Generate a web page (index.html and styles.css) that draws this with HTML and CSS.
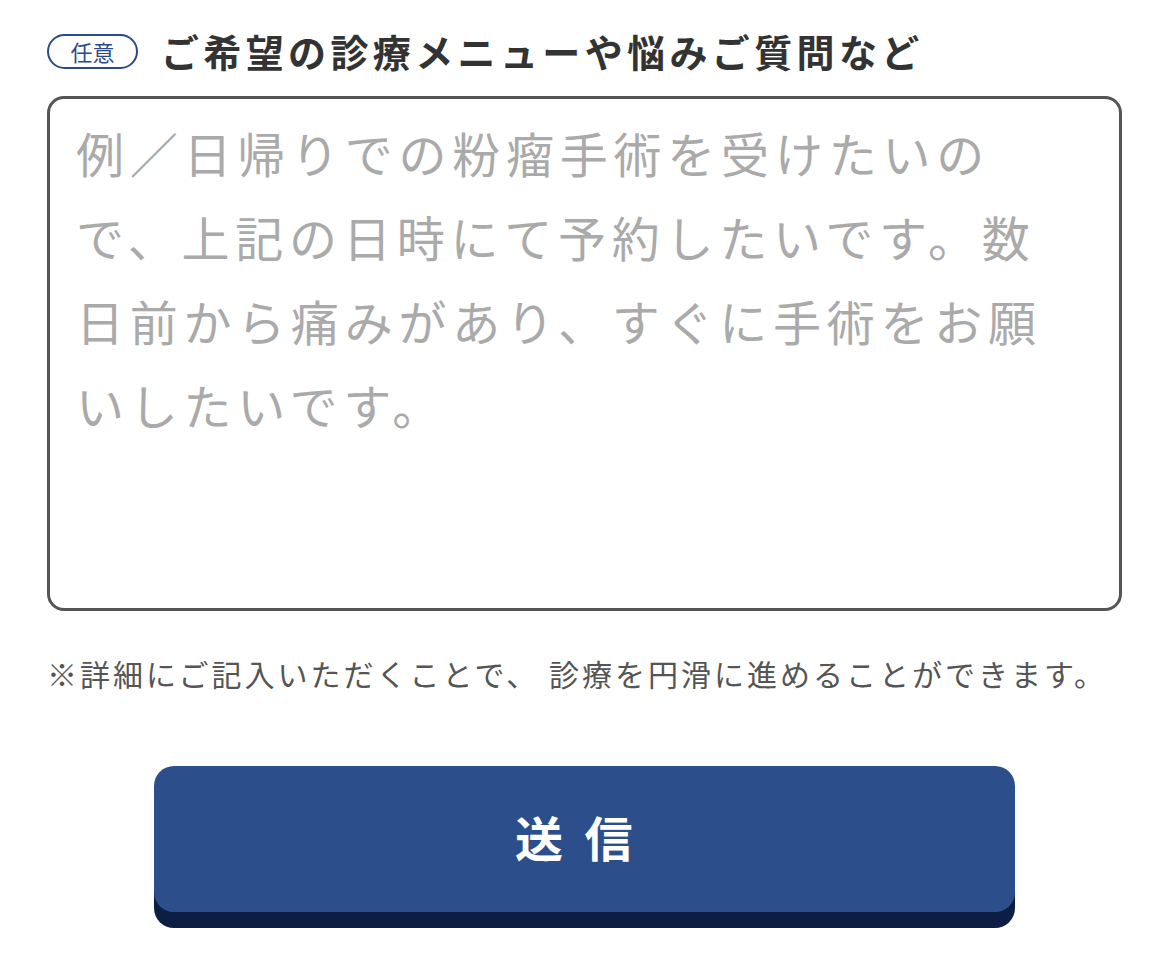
FILE: index.html
```html
<!DOCTYPE html>
<html lang="ja">
<head>
<meta charset="utf-8">
<title>お問い合わせ</title>
<link rel="stylesheet" href="styles.css">
</head>
<body>
<form class="form">
  <div class="field-head">
    <span class="badge">任意</span>
    <label class="field-label" for="msg">ご希望の診療メニューや悩みご質問など</label>
  </div>
  <textarea id="msg" class="field-input" placeholder="例／日帰りでの粉瘤手術を受けたいので、上記の日時にて予約したいです。数日前から痛みがあり、すぐに手術をお願いしたいです。"></textarea>
  <p class="note">※詳細にご記入いただくことで、 診療を円滑に進めることができます。</p>
  <div class="actions">
    <button type="button" class="submit">送信</button>
  </div>
</form>
</body>
</html>
```

FILE: styles.css
```css
html, body {
  margin: 0;
  padding: 0;
  background: #ffffff;
}

body {
  font-family: "Noto Sans CJK JP", "Noto Sans", sans-serif;
  color: #333333;
  min-height: 964px;
}

.form {
  padding: 33px 48px 36px 47px;
}

.field-head {
  display: flex;
  align-items: center;
  gap: 23px;
  height: 36px;
}

.badge {
  box-sizing: border-box;
  display: flex;
  align-items: center;
  justify-content: center;
  width: 91px;
  height: 35px;
  border: 2.5px solid #2b4b88;
  border-radius: 18px;
  color: #2b4b88;
  font-size: 22px;
  line-height: 1;
  letter-spacing: 0;
}

.field-label {
  font-size: 38px;
  font-weight: 700;
  line-height: 1;
  letter-spacing: 0.115em;
  color: #333333;
}

.field-input {
  display: block;
  box-sizing: border-box;
  width: 100%;
  height: 515px;
  margin: 27px 0 0;
  padding: 11px 60px 11px 26px;
  border: 3px solid #555555;
  border-radius: 17px;
  font-family: "Noto Sans CJK JP", "Noto Sans", sans-serif;
  font-size: 48px;
  line-height: 84px;
  letter-spacing: 0.12em;
  color: #333333;
  resize: none;
  outline: none;
  line-break: strict;
}

.field-input::placeholder {
  color: #aaaaaa;
  opacity: 1;
}

.note {
  margin: 42px 0 0;
  font-size: 30px;
  line-height: 40px;
  letter-spacing: 0.1em;
  color: #555555;
  white-space: nowrap;
}

.actions {
  display: flex;
  justify-content: center;
  margin-top: 73px;
  padding-bottom: 16px;
}

.submit {
  width: 861px;
  height: 146px;
  border: none;
  border-radius: 20px;
  background: #2c4f8c;
  box-shadow: 0 16px 0 #0c1e44;
  color: #ffffff;
  font-family: "Noto Sans CJK JP", "Noto Sans", sans-serif;
  font-size: 48px;
  font-weight: 700;
  letter-spacing: 0.45em;
  line-height: 1;
  padding: 0 0 6px;
  cursor: pointer;
}
```
